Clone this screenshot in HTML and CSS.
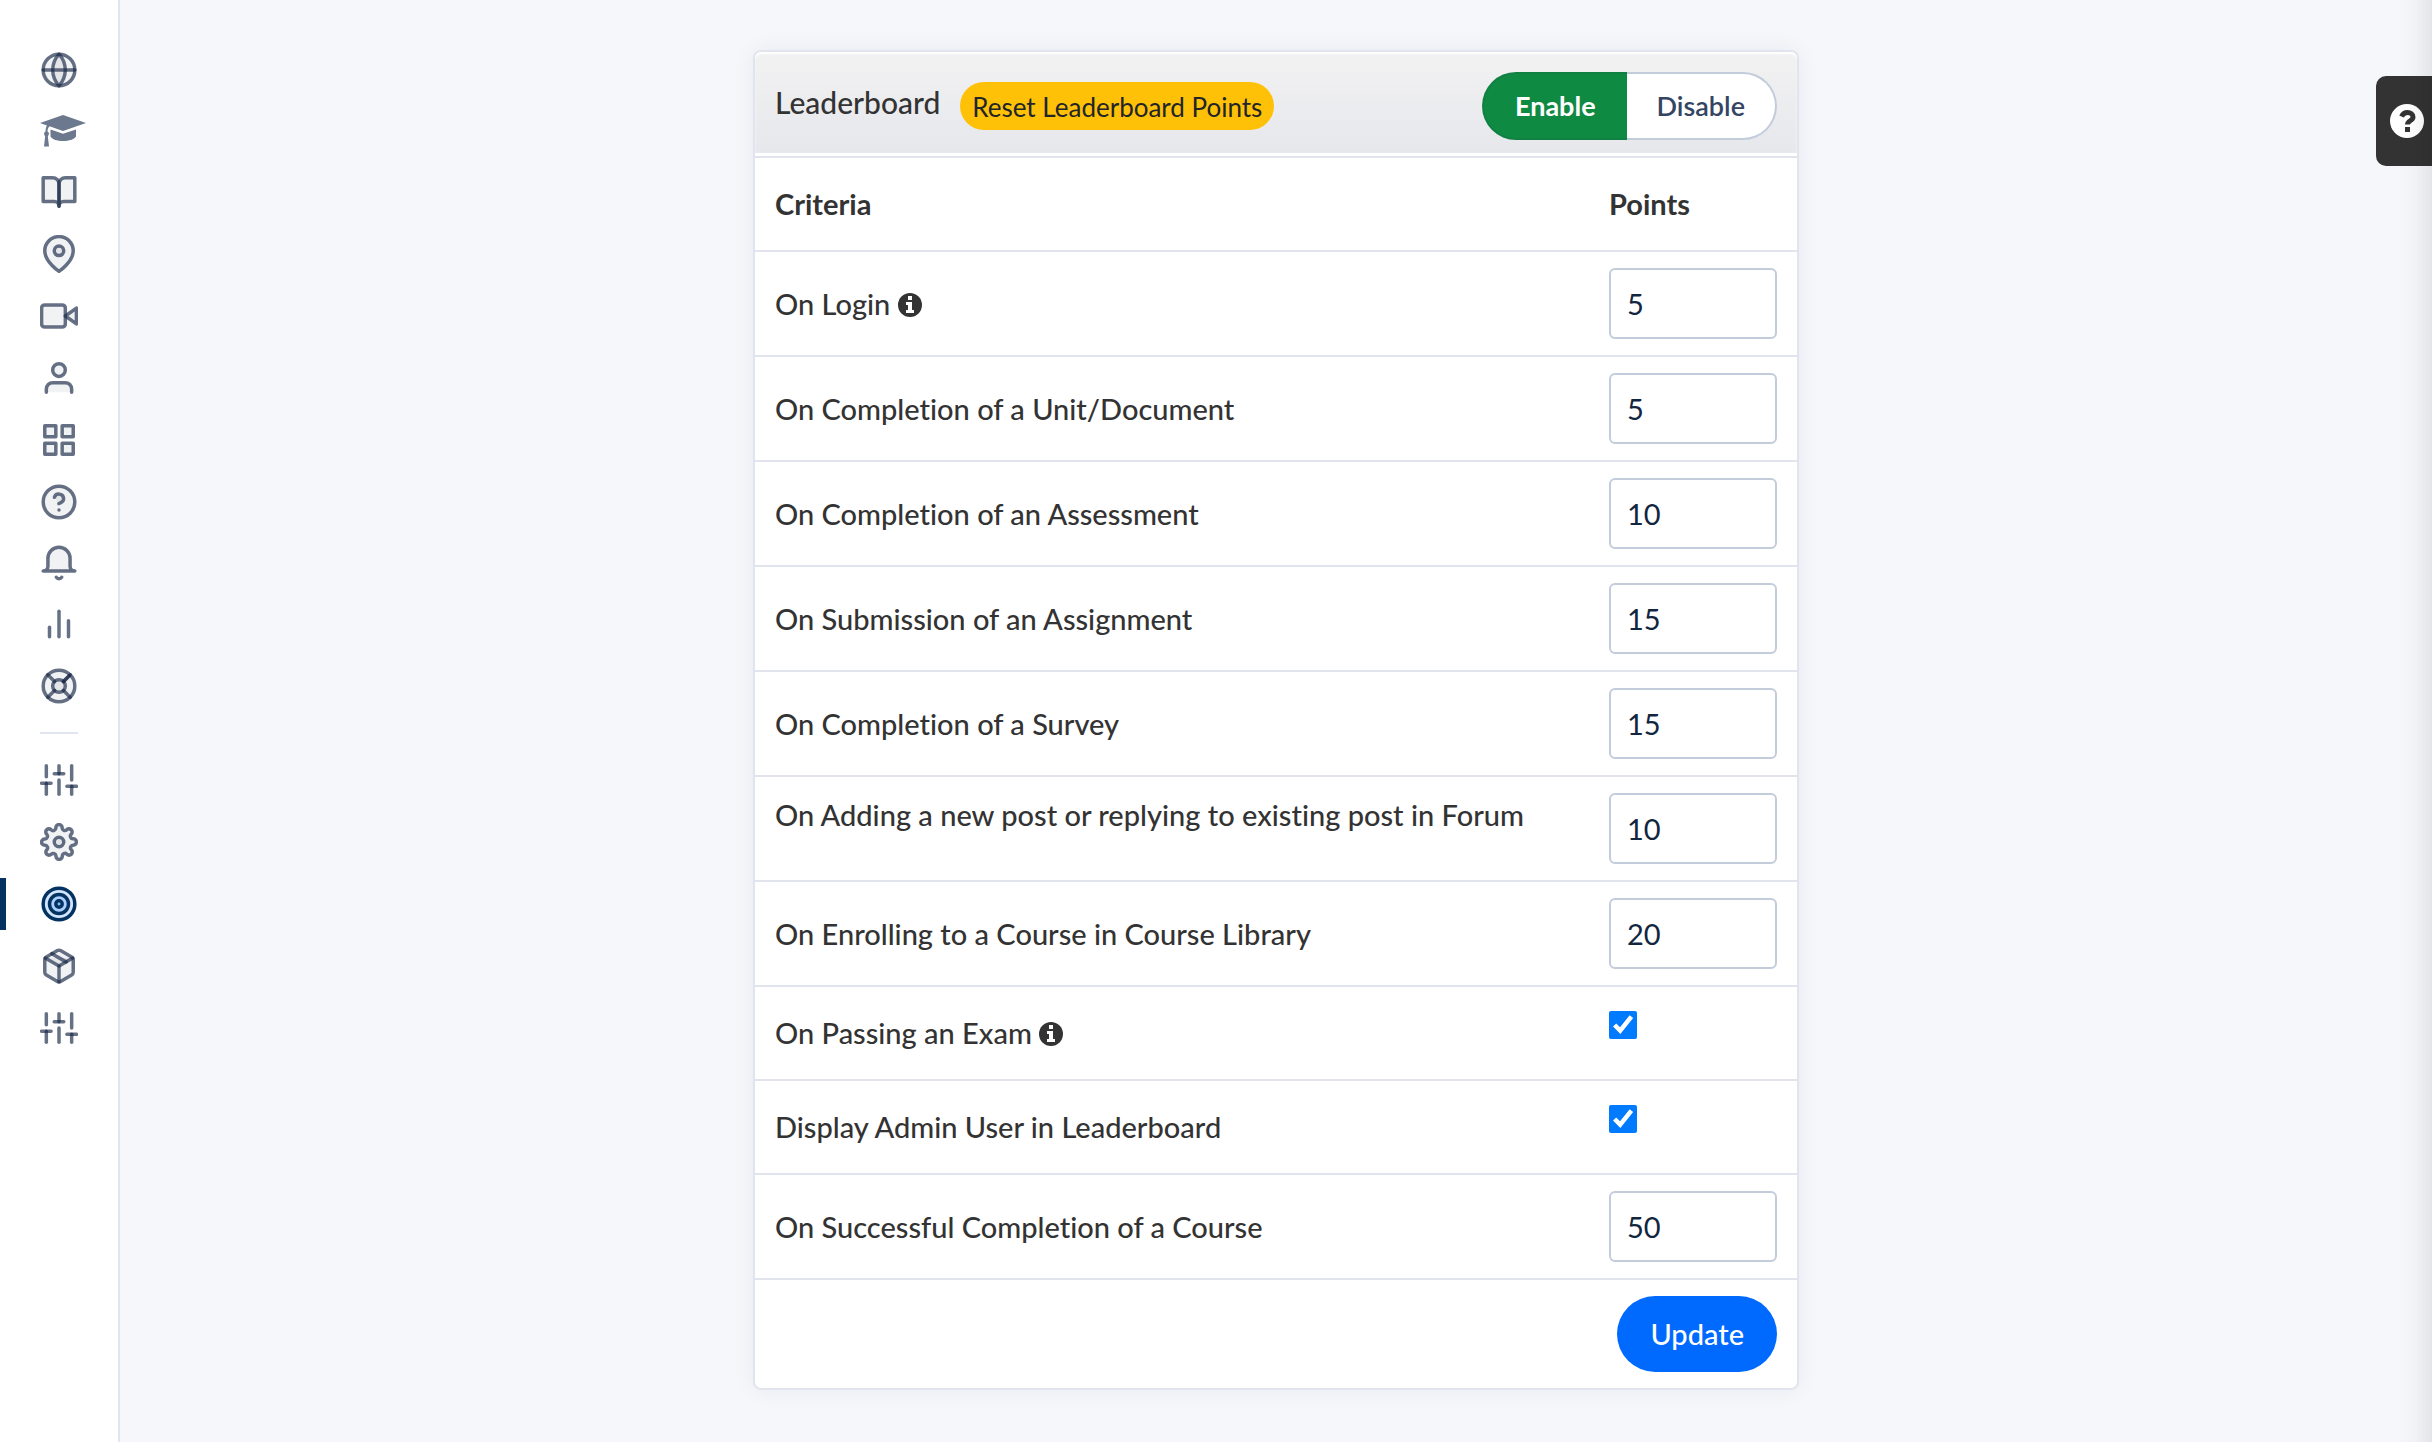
FILE: index.html
```
<!DOCTYPE html>
<html lang="en">
<head>
    <meta charset="utf-8">
    <title>Leaderboard</title>
    <link rel="stylesheet" href="styles.css">
</head>
<body>
    <div class="layout">
        <nav class="sidebar" aria-label="Main">
            <ul class="menu">
                <li><a href="#" aria-label="Website">
                    <svg class="icon" viewBox="0 0 24 24"><circle cx="12" cy="12" r="10"/><path d="M2 12h20"/><path d="M12 2a15.3 15.3 0 0 1 4 10 15.3 15.3 0 0 1-4 10 15.3 15.3 0 0 1-4-10 15.3 15.3 0 0 1 4-10z"/></svg>
                </a></li>
                <li class="short"><a href="#" aria-label="Courses">
                    <svg class="icon-cap" viewBox="0 0 46 32"><path d="M23 0L46 8L23 16L9.5 11.3C8 12.800 7.500 14.500 7.500 16.500A2.600 2.600 0 0 1 7.800 21L9 31.500H4L5.200 21A2.600 2.600 0 0 1 5.500 16.500C5.600 14 6 12.200 7 10.500L0 8z"/><path d="M10.500 14.500L23 18.700L36 14.500V21.500C34 24.500 29 26 23 26S12.500 24.500 10.500 21.500z"/></svg>
                </a></li>
                <li><a href="#" aria-label="Library">
                    <svg class="icon" viewBox="0 0 24 24"><path d="M2 3h6a4 4 0 0 1 4 4v14a3 3 0 0 0-3-3H2z"/><path d="M22 3h-6a4 4 0 0 0-4 4v14a3 3 0 0 1 3-3h7z"/></svg>
                </a></li>
                <li><a href="#" aria-label="Locations">
                    <svg class="icon" viewBox="0 0 24 24"><path d="M21 10c0 7-9 13-9 13s-9-6-9-13a9 9 0 0 1 18 0z"/><circle cx="12" cy="10" r="3"/></svg>
                </a></li>
                <li><a href="#" aria-label="Live classes">
                    <svg class="icon" viewBox="0 0 24 24"><path d="M23 7l-7 5 7 5V7z"/><rect x="1" y="5" width="15" height="14" rx="2"/></svg>
                </a></li>
                <li><a href="#" aria-label="Users">
                    <svg class="icon" viewBox="0 0 24 24"><path d="M20 21v-2a4 4 0 0 0-4-4H8a4 4 0 0 0-4 4v2"/><circle cx="12" cy="7" r="4"/></svg>
                </a></li>
                <li><a href="#" aria-label="Apps">
                    <svg class="icon" viewBox="0 0 24 24"><rect x="3" y="3" width="7" height="7"/><rect x="14" y="3" width="7" height="7"/><rect x="14" y="14" width="7" height="7"/><rect x="3" y="14" width="7" height="7"/></svg>
                </a></li>
                <li><a href="#" aria-label="Questions">
                    <svg class="icon" viewBox="0 0 24 24"><circle cx="12" cy="12" r="10"/><path d="M9.090 9a3 3 0 0 1 5.830 1c0 2-3 3-3 3"/><path d="M12 17h.01"/></svg>
                </a></li>
                <li class="short"><a href="#" aria-label="Notifications">
                    <svg class="icon" viewBox="0 0 24 24"><path d="M22 17H2a3 3 0 0 0 3-3V9a7 7 0 0 1 14 0v5a3 3 0 0 0 3 3z"/><path d="M13.730 21a2 2 0 0 1-3.460 0"/></svg>
                </a></li>
                <li><a href="#" aria-label="Reports">
                    <svg class="icon" viewBox="0 0 24 24"><path d="M18 20V10"/><path d="M12 20V4"/><path d="M6 20v-6"/></svg>
                </a></li>
                <li><a href="#" aria-label="Support">
                    <svg class="icon" viewBox="0 0 24 24"><circle cx="12" cy="12" r="10"/><circle cx="12" cy="12" r="4"/><path d="M4.930 4.930l4.240 4.240"/><path d="M14.830 14.830l4.240 4.240"/><path d="M14.830 9.170l4.240-4.240"/><path d="M14.830 9.170l3.530-3.530"/><path d="M4.930 19.070l4.240-4.240"/></svg>
                </a></li>
            </ul>
            <hr class="divider">
            <ul class="menu">
                <li><a href="#" aria-label="Preferences">
                    <svg class="icon" viewBox="0 0 24 24"><path d="M4 21v-7"/><path d="M4 10V3"/><path d="M12 21v-9"/><path d="M12 8V3"/><path d="M20 21v-5"/><path d="M20 12V3"/><path d="M1 14h6"/><path d="M9 8h6"/><path d="M17 16h6"/></svg>
                </a></li>
                <li><a href="#" aria-label="Settings">
                    <svg class="icon" viewBox="0 0 24 24"><circle cx="12" cy="12" r="3"/><path d="M19.4 15a1.650 1.650 0 0 0 .33 1.820l.06.06a2 2 0 0 1 0 2.830 2 2 0 0 1-2.830 0l-.06-.06a1.650 1.650 0 0 0-1.820-.33 1.650 1.650 0 0 0-1 1.510V21a2 2 0 0 1-2 2 2 2 0 0 1-2-2v-.09A1.650 1.650 0 0 0 9 19.4a1.650 1.650 0 0 0-1.820.33l-.06.06a2 2 0 0 1-2.830 0 2 2 0 0 1 0-2.830l.06-.06a1.650 1.650 0 0 0 .33-1.820 1.650 1.650 0 0 0-1.510-1H3a2 2 0 0 1-2-2 2 2 0 0 1 2-2h.09A1.650 1.650 0 0 0 4.600 9a1.650 1.650 0 0 0-.33-1.820l-.06-.06a2 2 0 0 1 0-2.830 2 2 0 0 1 2.830 0l.06.06a1.650 1.650 0 0 0 1.820.33H9a1.650 1.650 0 0 0 1-1.510V3a2 2 0 0 1 2-2 2 2 0 0 1 2 2v.09a1.650 1.650 0 0 0 1 1.510 1.650 1.650 0 0 0 1.820-.33l.06-.06a2 2 0 0 1 2.830 0 2 2 0 0 1 0 2.830l-.06.06a1.650 1.650 0 0 0-.33 1.820V9a1.650 1.650 0 0 0 1.510 1H21a2 2 0 0 1 2 2 2 2 0 0 1-2 2h-.09a1.650 1.650 0 0 0-1.510 1z"/></svg>
                </a></li>
                <li class="active"><a href="#" aria-label="Gamification" aria-current="page">
                    <svg class="icon" viewBox="0 0 24 24"><circle cx="12" cy="12" r="10"/><circle cx="12" cy="12" r="6"/><circle cx="12" cy="12" r="2"/></svg>
                </a></li>
                <li><a href="#" aria-label="Packages">
                    <svg class="icon" viewBox="0 0 24 24"><path d="M16.500 9.400l-9-5.190"/><path d="M21 16V8a2 2 0 0 0-1-1.730l-7-4a2 2 0 0 0-2 0l-7 4A2 2 0 0 0 3 8v8a2 2 0 0 0 1 1.730l7 4a2 2 0 0 0 2 0l7-4A2 2 0 0 0 21 16z"/><path d="M3.270 6.960L12 12.010l8.730-5.050"/><path d="M12 22.080V12"/></svg>
                </a></li>
                <li><a href="#" aria-label="Advanced">
                    <svg class="icon" viewBox="0 0 24 24"><path d="M4 21v-7"/><path d="M4 10V3"/><path d="M12 21v-9"/><path d="M12 8V3"/><path d="M20 21v-5"/><path d="M20 12V3"/><path d="M1 14h6"/><path d="M9 8h6"/><path d="M17 16h6"/></svg>
                </a></li>
            </ul>
        </nav>

        <main class="content">
            <form class="card">
                <div class="card-header">
                    <span class="title">Leaderboard</span>
                    <button type="button" class="btn-reset">Reset Leaderboard Points</button>
                    <div class="toggle">
                        <button type="button" class="on">Enable</button>
                        <button type="button">Disable</button>
                    </div>
                </div>
                <table class="criteria">
                    <thead>
                        <tr><th>Criteria</th><th class="points">Points</th></tr>
                    </thead>
                    <tbody>
                        <tr>
                            <td><label for="login">On Login</label>
                                <svg class="info" viewBox="0 0 24 24"><circle cx="12" cy="12" r="12"/><path d="M10 3h4v4h-4zM8 9h6v8h2v3H8v-3h2v-5H8z"/></svg></td>
                            <td><input type="text" id="login" value="5"></td>
                        </tr>
                        <tr>
                            <td><label for="unit">On Completion of a Unit/Document</label></td>
                            <td><input type="text" id="unit" value="5"></td>
                        </tr>
                        <tr>
                            <td><label for="assessment">On Completion of an Assessment</label></td>
                            <td><input type="text" id="assessment" value="10"></td>
                        </tr>
                        <tr>
                            <td><label for="assignment">On Submission of an Assignment</label></td>
                            <td><input type="text" id="assignment" value="15"></td>
                        </tr>
                        <tr>
                            <td><label for="survey">On Completion of a Survey</label></td>
                            <td><input type="text" id="survey" value="15"></td>
                        </tr>
                        <tr class="top">
                            <td><label for="forum">On Adding a new post or replying to existing post in Forum</label></td>
                            <td><input type="text" id="forum" value="10"></td>
                        </tr>
                        <tr>
                            <td><label for="enroll">On Enrolling to a Course in Course Library</label></td>
                            <td><input type="text" id="enroll" value="20"></td>
                        </tr>
                        <tr class="check">
                            <td><label for="exam">On Passing an Exam</label>
                                <svg class="info" viewBox="0 0 24 24"><circle cx="12" cy="12" r="12"/><path d="M10 3h4v4h-4zM8 9h6v8h2v3H8v-3h2v-5H8z"/></svg></td>
                            <td><input type="checkbox" id="exam" checked></td>
                        </tr>
                        <tr class="check">
                            <td><label for="admin">Display Admin User in Leaderboard</label></td>
                            <td><input type="checkbox" id="admin" checked></td>
                        </tr>
                        <tr>
                            <td><label for="course">On Successful Completion of a Course</label></td>
                            <td><input type="text" id="course" value="50"></td>
                        </tr>
                    </tbody>
                </table>
                <div class="card-footer">
                    <button type="submit" class="btn-update">Update</button>
                </div>
            </form>
        </main>
    </div>

    <button type="button" class="help" aria-label="Help">
        <svg viewBox="0 0 34 34"><circle cx="17" cy="17" r="17"/><path d="M11.500 12.500C13 9.500 15 8.500 17.500 8.500C20.500 8.500 23 10.300 23 13C23 17 17.500 16.500 17.500 20.500"/><rect x="15" y="23" width="5" height="5"/></svg>
    </button>
    <div class="edge"></div>
</body>
</html>
```
FILE: styles.css
```
* {
    box-sizing: border-box;
}
body {
    margin: 0;
    background: #f5f7fb;
    color: #333;
    font-family: Lato, "Open Sans", sans-serif;
    font-size: 29px;
    font-weight: 500;
    line-height: 44px;
    font-variant-ligatures: none;
}
button, input {
    font: inherit;
}
.layout {
    display: flex;
    min-height: 100vh;
}

/* Sidebar */
.sidebar {
    flex: 0 0 120px;
    padding-top: 39px;
    background: #fff;
    border-right: 2px solid #e1e5ef;
}
.menu {
    margin: 0;
    padding: 0;
    list-style: none;
}
.menu li {
    display: flex;
    align-items: center;
    height: 62px;
    padding-left: 40px;
}
.menu li.short {
    height: 60px;
}
.menu a {
    display: flex;
}
.menu li.active {
    padding-left: 34px;
}
.menu li.active::before {
    content: "";
    width: 6px;
    height: 52px;
    margin-left: -34px;
    margin-right: 34px;
    background: #053361;
}
.icon {
    width: 38px;
    height: 38px;
    fill: rgba(24, 40, 70, 0.06);
    stroke: rgba(24, 40, 70, 0.66);
    stroke-width: 2.2;
    stroke-linecap: round;
    stroke-linejoin: round;
}
.active .icon {
    fill: rgba(0, 110, 255, 0.18);
    stroke: #053361;
}
.icon-cap {
    width: 46px;
    height: 32px;
    fill: #6b788d;
}
.divider {
    width: 38px;
    height: 2px;
    margin: 15px 0 15px 40px;
    border: 0;
    background: #e1e5ef;
}

/* Card */
.content {
    flex: 1;
    padding: 50px 20px;
}
.card {
    max-width: 1046px;
    margin: 0 auto;
    background: #fff;
    border: 2px solid #e1e4ec;
    border-radius: 8px;
    box-shadow: 0 0 24px rgba(30, 35, 60, 0.06);
}
.card-header {
    display: flex;
    align-items: center;
    gap: 20px;
    padding: 20px 20px 16px;
    border-bottom: 2px solid #e1e4ec;
    border-radius: 6px 6px 0 0;
    background: linear-gradient(#f2f2f2, #e6e7ec);
    box-shadow: inset 0 2px 2px #fff, inset 0 -3px 0 #fff;
}
.title {
    padding-bottom: 8px;
    font-size: 30px;
}
.btn-reset {
    height: 48px;
    padding: 2px 12px 0;
    border: 0;
    border-radius: 24px;
    background: #ffc107;
    color: #212529;
    font-size: 26px;
    font-weight: 400;
}
.toggle {
    display: flex;
    margin-left: auto;
}
.toggle button {
    height: 68px;
    padding: 0 30px;
    border: 2px solid #c2ccdb;
    border-left: 0;
    border-radius: 0 34px 34px 0;
    background: #fff;
    color: #344563;
    font-size: 27px;
    font-weight: 600;
}
.toggle button.on {
    padding: 0 31px;
    border: 2px solid #108043;
    border-right: 0;
    border-radius: 34px 0 0 34px;
    background: #0f8a43;
    color: #fff;
    font-weight: 700;
}

/* Criteria table */
.criteria {
    width: 100%;
    border-collapse: separate;
    border-spacing: 0;
}
.criteria th,
.criteria td {
    height: 105px;
    padding: 16px 20px;
    border-bottom: 2px solid #e1e4ec;
    text-align: left;
    vertical-align: middle;
}
.criteria th,
.criteria .check td {
    height: 94px;
}
.criteria th {
    font-weight: 700;
}
.criteria .points {
    width: 208px;
}
.criteria .top td {
    vertical-align: top;
}
.criteria input[type="text"] {
    display: block;
    width: 100%;
    height: 71px;
    padding: 0 16px;
    border: 2px solid #c2ccdb;
    border-radius: 6px;
    background: #fff;
    color: #12263f;
    font-weight: 400;
}
.criteria .check td:last-child {
    padding-top: 24px;
    vertical-align: top;
}
.criteria input[type="checkbox"] {
    display: block;
    width: 28px;
    height: 28px;
    margin: 0;
    accent-color: #007aff;
}
.info {
    width: 24px;
    height: 24px;
    vertical-align: -2px;
    fill: #333;
}
.info path {
    fill: #fff;
}
.card-footer {
    display: flex;
    justify-content: flex-end;
    padding: 16px 20px;
}
.btn-update {
    height: 76px;
    padding: 0 33px;
    border: 0;
    border-radius: 38px;
    background: #006aff;
    color: #fff;
}

/* Help tab on the right edge */
.help {
    position: fixed;
    top: 76px;
    right: 0;
    width: 56px;
    height: 90px;
    padding: 0 0 0 14px;
    border: 0;
    border-radius: 10px 0 0 10px;
    background: #333;
    text-align: left;
}
.help svg {
    display: block;
    width: 34px;
    height: 34px;
    fill: #fff;
}
.help path {
    fill: none;
    stroke: #333;
    stroke-width: 5;
}
.help rect {
    fill: #333;
}
.edge {
    position: fixed;
    top: 0;
    right: 0;
    bottom: 0;
    width: 34px;
    background: linear-gradient(to right, rgba(0, 0, 0, 0), rgba(0, 0, 0, 0.02) 50%, rgba(0, 0, 0, 0.07));
    pointer-events: none;
}
```
